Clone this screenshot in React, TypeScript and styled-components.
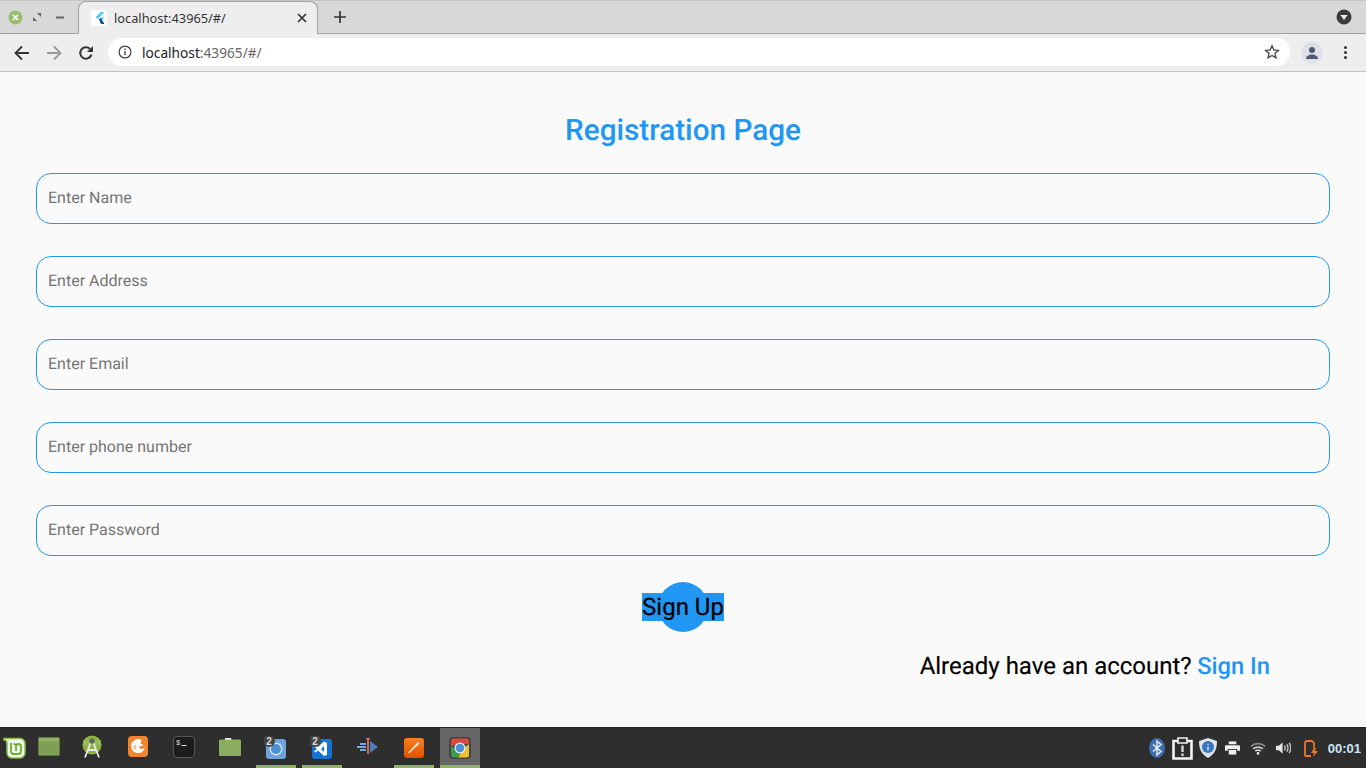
import React from 'react';
import styled, {createGlobalStyle} from 'styled-components';

const GlobalStyle = createGlobalStyle`
  html, body {
    margin: 0;
    padding: 0;
    height: 100%;
    overflow: hidden;
  }
  #root {
    height: 100%;
  }
`;

const Screen = styled.div`
  width: 1366px;
  height: 768px;
  display: flex;
  flex-direction: column;
  background: #fafafa;
  font-family: Roboto, sans-serif;
`;

/* browser chrome */
const TabStrip = styled.div`
  height: 34px;
  box-sizing: border-box;
  display: flex;
  align-items: flex-end;
  background: #d8d8d8;
  border-top: 1px solid #c4c4c4;
  border-bottom: 1px solid #a3a3a3;
`;
const WindowButtons = styled.div`
  width: 78px;
  height: 32px;
  display: flex;
  align-items: center;
  padding-left: 7px;
  box-sizing: border-box;
  gap: 6px;
`;
const WindowButton = styled.div`
  width: 16px;
  height: 16px;
  display: flex;
  align-items: center;
  justify-content: center;
`;
const Tab = styled.div`
  width: 240px;
  height: 33px;
  box-sizing: border-box;
  margin-bottom: -1px;
  display: flex;
  align-items: center;
  padding: 0 10px 0 12px;
  background: #eeeeee;
  border: 1px solid #a3a3a3;
  border-bottom: none;
  border-radius: 8px 8px 0 0;
`;
const TabTitle = styled.span`
  flex: 1;
  margin-left: 7px;
  font-family: 'Noto Sans', sans-serif;
  font-size: 12.8px;
  color: #333;
  white-space: nowrap;
`;
const Favicon = styled.div`
  width: 16px;
  height: 16px;
  background: #fff;
  display: flex;
`;
const NewTab = styled.div`
  width: 44px;
  height: 32px;
  display: flex;
  align-items: center;
  justify-content: center;
`;
const TabSpacer = styled.div`
  flex: 1;
`;
const TabMenu = styled.div`
  width: 16px;
  height: 32px;
  margin-right: 14px;
  display: flex;
  align-items: center;
`;
const Toolbar = styled.div`
  height: 38px;
  box-sizing: border-box;
  display: flex;
  align-items: center;
  background: #eeeeee;
  border-bottom: 1px solid #c2c2c2;
`;
const NavButton = styled.div`
  width: 32px;
  height: 32px;
  display: flex;
  align-items: center;
  justify-content: center;
`;
const NavGroup = styled.div`
  width: 108px;
  display: flex;
  padding-left: 6px;
  box-sizing: border-box;
`;
const Omnibox = styled.div`
  width: 1182px;
  height: 28px;
  margin-top: -1px;
  box-sizing: border-box;
  display: flex;
  align-items: center;
  padding: 0 10px;
  background: #fff;
  border-radius: 14px;
`;
const Url = styled.span`
  flex: 1;
  margin-left: 10px;
  font-family: 'Noto Sans', sans-serif;
  font-size: 13.7px;
  color: #222;
`;
const UrlRest = styled.span`
  color: #666;
`;
const Avatar = styled.div`
  width: 22px;
  height: 22px;
  margin-left: 11px;
  border-radius: 50%;
  background: #dfe1e7;
  display: flex;
  align-items: center;
  justify-content: center;
`;
const MenuDots = styled.div`
  margin-left: 21px;
  display: flex;
  flex-direction: column;
  gap: 2px;
`;
const MenuDot = styled.span`
  width: 3px;
  height: 3px;
  border-radius: 50%;
  background: #333;
`;

/* flutter page */
const Page = styled.main`
  flex: 1;
  display: flex;
  flex-direction: column;
  padding: 39px 36px 0;
  background: #fafafa;
  text-rendering: geometricPrecision;
`;
const Title = styled.h1`
  margin: 0 0 22px;
  text-align: center;
  font-size: 29.7px;
  line-height: 40px;
  font-weight: 500;
  color: #2196f3;
`;
const Fields = styled.div`
  display: flex;
  flex-direction: column;
  gap: 32px;
`;
const Field = styled.div`
  height: 51px;
  box-sizing: border-box;
  display: flex;
  align-items: center;
  padding: 0 11px 2px;
  border: 1px solid #2196f3;
  border-radius: 15px;
  font-size: 16px;
  color: #757575;
`;
const SignUpRow = styled.div`
  margin-top: 26px;
  display: flex;
  justify-content: center;
`;
const SignUpButton = styled.div`
  position: relative;
  width: 82px;
  height: 50px;
  display: flex;
  align-items: center;
  justify-content: center;
  &::before {
    content: '';
    position: absolute;
    left: 16px;
    top: 0;
    width: 50px;
    height: 50px;
    border-radius: 50%;
    background: #2196f3;
  }
`;
const SignUpLabel = styled.span`
  position: relative;
  background: #2196f3;
  color: #000;
  font-size: 24px;
  line-height: 28px;
  white-space: nowrap;
  -webkit-text-stroke: 0.2px #000;
`;
const AccountRow = styled.div`
  margin-top: 20px;
  padding-right: 60px;
  display: flex;
  justify-content: flex-end;
  font-size: 24px;
  line-height: 28px;
  color: #000;
  -webkit-text-stroke: 0.15px #000;
`;
const SignInLink = styled.span`
  margin-left: 5.5px;
  color: #2196f3;
  font-size: 23.7px;
  font-weight: 500;
  -webkit-text-stroke: 0;
`;

/* mint panel */
const Panel = styled.footer`
  height: 41px;
  display: flex;
  align-items: stretch;
  background: #2e2e2e;
  border-top: 1px solid #262626;
  box-sizing: border-box;
`;
const MenuSlot = styled.div`
  width: 29px;
  display: flex;
  align-items: center;
  justify-content: center;
`;
const Launcher = styled.div<{$running?: boolean; $active?: boolean; $after?: number}>`
  width: 40px;
  margin-right: ${p => p.$after ?? 6}px;
  box-sizing: border-box;
  display: flex;
  align-items: center;
  justify-content: center;
  background: ${p => (p.$active ? '#666666' : 'transparent')};
  border-bottom: 3px solid ${p => (p.$running ? '#8fb262' : 'transparent')};
  padding-top: ${p => (p.$running ? 3 : 0)}px;
`;
const Tray = styled.div`
  margin-left: auto;
  display: flex;
  align-items: center;
  padding-right: 5px;
`;
const TraySlot = styled.div<{$gap: number}>`
  margin-left: ${p => p.$gap}px;
  display: flex;
`;
const Clock = styled.span`
  margin-left: 10px;
  font-family: 'Liberation Sans', sans-serif;
  font-size: 13px;
  font-weight: 700;
  color: #cfe5f8;
`;

const Ico = styled.svg`
  display: block;
  flex: none;
`;

function Badged({children}: {children: React.ReactNode}) {
  return (
    <Ico width="24" height="24" viewBox="0 0 24 24">
      {children}
      <circle cx="5" cy="5" r="6" fill="#444" />
      <text x="5" y="8.5" textAnchor="middle" fontSize="10" fontWeight="700" fontFamily="Liberation Sans" fill="#ddd">
        2
      </text>
    </Ico>
  );
}

const FIELDS = ['Enter Name', 'Enter Address', 'Enter Email', 'Enter phone number', 'Enter Password'];

export default function App() {
  return (
    <Screen>
      <GlobalStyle />
      <TabStrip>
        <WindowButtons>
          <WindowButton>
            <Ico width="15" height="15" viewBox="0 0 15 15">
              <circle cx="7.5" cy="7.5" r="7" fill="#98bd6b" />
              <path d="M5 5l5 5M10 5l-5 5" stroke="#fff" strokeWidth="1.7" />
            </Ico>
          </WindowButton>
          <WindowButton>
            <Ico width="8" height="8" viewBox="0 0 10 10">
              <path d="M5 0h5v5zM0 5l5 5H0z" fill="#666" />
            </Ico>
          </WindowButton>
          <WindowButton>
            <Ico width="8" height="3" viewBox="0 0 8 3" style={{marginLeft: 2}}>
              <rect width="8" height="2" y="0.5" fill="#666" />
            </Ico>
          </WindowButton>
        </WindowButtons>
        <Tab>
          <Favicon>
            <Ico width="16" height="16" viewBox="0 0 16 16">
              <path d="M10 2h3.500L6.500 9 4.700 7.300z" fill="#47c5fb" />
              <path d="M10 7.500h3.500L9.700 11.300l-1.800-1.700z" fill="#47c5fb" />
              <path d="M7.900 9.600 9.700 8l3.800 6H10z" fill="#00569e" />
            </Ico>
          </Favicon>
          <TabTitle>localhost:43965/#/</TabTitle>
          <Ico width="10" height="10" viewBox="0 0 10 10">
            <path d="M1 1l8 8M9 1l-8 8" stroke="#333" strokeWidth="1.7" />
          </Ico>
        </Tab>
        <NewTab>
          <Ico width="12" height="12" viewBox="0 0 12 12">
            <path d="M6 0v12M0 6h12" stroke="#333" strokeWidth="1.7" />
          </Ico>
        </NewTab>
        <TabSpacer />
        <TabMenu>
          <Ico width="16" height="16" viewBox="0 0 16 16">
            <circle cx="8" cy="8" r="7.500" fill="#3a3a3a" />
            <path d="M4.400 6h7.200L8 11z" fill="#eee" />
          </Ico>
        </TabMenu>
      </TabStrip>
      <Toolbar>
        <NavGroup>
          <NavButton>
            <Ico width="16" height="16" viewBox="0 0 16 16">
              <path d="M15 8H2M8 1.500 1.500 8 8 14.500" stroke="#333" strokeWidth="1.800" fill="none" />
            </Ico>
          </NavButton>
          <NavButton>
            <Ico width="16" height="16" viewBox="0 0 16 16">
              <path d="M1 8h13M8 1.500 14.500 8 8 14.500" stroke="#999" strokeWidth="1.800" fill="none" />
            </Ico>
          </NavButton>
          <NavButton>
            <Ico width="16" height="16" viewBox="0 0 16 16">
              <path d="M13.400 9.600A5.700 5.700 0 1 1 12 4" stroke="#333" strokeWidth="2" fill="none" />
              <path d="M15 1v6H9z" fill="#333" />
            </Ico>
          </NavButton>
        </NavGroup>
        <Omnibox>
          <Ico width="14" height="14" viewBox="0 0 14 14">
            <circle cx="7" cy="7" r="5.900" stroke="#444" strokeWidth="1.300" fill="none" />
            <path d="M7 6v4.200M7 3.600v1.400" stroke="#444" strokeWidth="1.400" />
          </Ico>
          <Url>
            localhost<UrlRest>:43965/#/</UrlRest>
          </Url>
          <Ico width="16" height="16" viewBox="0 0 16 16">
            <path
              d="M8 1.800 9.800 6l4.600.4-3.500 3 1.100 4.500L8 11.500l-4 2.400 1.100-4.500-3.500-3L6.200 6z"
              stroke="#444"
              strokeWidth="1.300"
              fill="none"
            />
          </Ico>
        </Omnibox>
        <Avatar>
          <Ico width="14" height="14" viewBox="0 0 14 14">
            <circle cx="7" cy="4" r="3" fill="#4d5b76" />
            <path d="M1 13c0-3 3-4.500 6-4.500s6 1.500 6 4.500z" fill="#4d5b76" />
          </Ico>
        </Avatar>
        <MenuDots>
          <MenuDot />
          <MenuDot />
          <MenuDot />
        </MenuDots>
      </Toolbar>

      <Page>
        <Title>Registration Page</Title>
        <Fields>
          {FIELDS.map(label => (
            <Field key={label}>{label}</Field>
          ))}
        </Fields>
        <SignUpRow>
          <SignUpButton>
            <SignUpLabel>Sign Up</SignUpLabel>
          </SignUpButton>
        </SignUpRow>
        <AccountRow>
          Already have an account?<SignInLink>Sign In</SignInLink>
        </AccountRow>
      </Page>

      <Panel>
        <MenuSlot>
          <Ico width="23" height="22" viewBox="0 0 23 22">
            <path d="M1 1.500h16a5 5 0 0 1 5 5V16a5 5 0 0 1-5 5H9a5 5 0 0 1-5-5V6a3 3 0 0 0-3-3z" fill="#f1f7e8" stroke="#86be4b" strokeWidth="1.500" />
            <path d="M8 6v8a3 3 0 0 0 3 3h4a3 3 0 0 0 3-3V9.500a2.500 2.500 0 0 0-5 0V14M13 9.500a2.500 2.500 0 0 0-2.500-2.500" stroke="#6fae35" strokeWidth="1.800" fill="none" />
          </Ico>
        </MenuSlot>
        <Launcher $after={3}>
          <Ico width="22" height="19" viewBox="0 0 22 19">
            <rect x="0.500" y="0.500" width="21" height="18" rx="1" fill="#7f9f55" stroke="#5e7a3c" />
            <rect x="1" y="1" width="20" height="3.500" fill="#93b268" />
          </Ico>
        </Launcher>
        <Launcher>
          <Ico width="20" height="24" viewBox="0 0 20 24">
            <circle cx="10" cy="10" r="9.500" fill="#8cb33f" />
            <path d="M1 5h18v5H1z" fill="#a8c86a" opacity="0.500" />
            <path d="M10 4 3 22.500M10 4l7 18.500M5.500 15h9" stroke="#e8e8e8" strokeWidth="1.800" fill="none" />
            <circle cx="10" cy="6" r="2.800" fill="#5d6b57" />
          </Ico>
        </Launcher>
        <Launcher>
          <Ico width="20" height="21" viewBox="0 0 20 21">
            <rect width="20" height="21" rx="4" fill="#f0852e" />
            <path d="M13.500 4a7 7 0 1 0 3.500 7c-1 2-3.500 2.500-5 1.500-1-.7-1-2 0-2.500h3c0-1.200-1-2-2.300-2 .3-1.500.5-2.700.8-4zM9 8.500c-1 .5-2 1.500-2 3 0 2 2 3 4 3-2.500 0-5-1-5-3.500 0-1 1-2 3-2.500z" fill="#fff" />
          </Ico>
        </Launcher>
        <Launcher>
          <Ico width="22" height="22" viewBox="0 0 22 22">
            <rect x="0.500" y="0.500" width="21" height="21" rx="3.500" fill="#1c1c1c" stroke="#555" />
            <text x="3" y="9" fontSize="7" fontFamily="Liberation Mono" fill="#ddd">$</text>
            <path d="M8.500 9.500h5" stroke="#ddd" strokeWidth="1" />
          </Ico>
        </Launcher>
        <Launcher>
          <Ico width="22" height="19" viewBox="0 0 22 19">
            <path d="M1 2.500h5l1-1.500h5l1 1.500h8a1 1 0 0 1 1 1V18a1 1 0 0 1-1 1H1a1 1 0 0 1-1-1V3.500a1 1 0 0 1 1-1z" fill="#8aac5e" />
            <path d="M6 1h6v1.800H6z" fill="#f0f0f0" />
          </Ico>
        </Launcher>
        <Launcher $running>
          <Badged>
            <rect x="2" y="3" width="20" height="20" rx="3" fill="#6fa3dc" />
            <circle cx="12" cy="13" r="6.500" fill="#cfe2f7" />
            <circle cx="12" cy="13" r="5" fill="#4d8ed1" />
          </Badged>
        </Launcher>
        <Launcher $running>
          <Badged>
            <rect x="2" y="3" width="20" height="20" rx="3" fill="#1273d4" />
            <path d="M17 7v12l-3 1-6-5.500-2.500 2L4 15.500 7 13 4 10.500 5.500 9 8 11l6-5.500zM14 10l-3 3 3 3z" fill="#fff" />
          </Badged>
        </Launcher>
        <Launcher>
          <Ico width="22" height="20" viewBox="0 0 22 20">
            <path d="M11 3v14" stroke="#c86a62" strokeWidth="2" />
            <path d="M9 1h4l-1 2h-2z" fill="#d97a6f" />
            <path d="M13 4l8 6-8 6z" fill="#4f7fb5" />
            <path d="M3 7h6M0 10h9M3 13h6" stroke="#79a8dc" strokeWidth="2" />
          </Ico>
        </Launcher>
        <Launcher $running>
          <Ico width="20" height="20" viewBox="0 0 20 20">
            <defs>
              <linearGradient id="pencilBg" x1="0" y1="0" x2="0" y2="1">
                <stop offset="0" stopColor="#f58220" />
                <stop offset="1" stopColor="#e04e00" />
              </linearGradient>
            </defs>
            <rect width="20" height="20" rx="3" fill="url(#pencilBg)" />
            <path d="M4 16l1-2.500 7.500-8 2-1.500 1 1-1.500 2-8 7.500z" fill="#f7e6d2" />
          </Ico>
        </Launcher>
        <Launcher $running $active $after={0}>
          <Ico width="22" height="22" viewBox="0 0 22 22">
            <rect width="22" height="22" rx="4" fill="#444" />
            <path d="M2 9V4a2.500 2.500 0 0 1 2.500-2.500h13A2.500 2.500 0 0 1 20 4v3H11z" fill="#d8483b" />
            <path d="M2 9v9a2.500 2.500 0 0 0 2.500 2.500H9l3-6z" fill="#3d9a4a" />
            <path d="M20 7v11a2.500 2.500 0 0 1-2.500 2.500H9L15 11z" fill="#eec22f" />
            <circle cx="11" cy="11" r="5.500" fill="#e8eef5" />
            <circle cx="11" cy="11" r="4.300" fill="#4f8fd6" />
          </Ico>
        </Launcher>
        <Tray>
          <TraySlot $gap={0}>
            <Ico width="16" height="20" viewBox="0 0 16 20">
              <ellipse cx="8" cy="10" rx="8" ry="10" fill="#3f70ae" />
              <path d="M4 6.500l8 7-4 3.500V3l4 3.500-8 7" stroke="#e8f0fa" strokeWidth="1.400" fill="none" />
            </Ico>
          </TraySlot>
          <TraySlot $gap={7}>
            <Ico width="21" height="23" viewBox="0 0 21 23">
              <path d="M6 4H1.500v17.500h18V4H15" stroke="#f4f4f4" strokeWidth="2.600" fill="none" />
              <path d="M6 1h9v5H6z" stroke="#f4f4f4" strokeWidth="1.600" fill="none" />
              <path d="M10.500 8.500v6.500M10.500 16.500v2.500" stroke="#d8d8d8" strokeWidth="2.400" />
            </Ico>
          </TraySlot>
          <TraySlot $gap={6}>
            <Ico width="18" height="20" viewBox="0 0 18 20">
              <path d="M9 0 18 3c0 8-2 13-9 17C2 16 0 11 0 3z" fill="#dfe3e6" />
              <circle cx="9" cy="9" r="6" fill="#3577c2" />
              <path d="M9 6v1M9 8.500v4" stroke="#e8f0fa" strokeWidth="1.400" />
            </Ico>
          </TraySlot>
          <TraySlot $gap={8}>
            <Ico width="15" height="14" viewBox="0 0 16 14">
              <path d="M4 0h8v3H4z" fill="#f0f0f0" />
              <path d="M1 4h14a1 1 0 0 1 1 1v5h-3V8H3v2H0V5a1 1 0 0 1 1-1z" fill="#f0f0f0" />
              <path d="M4 9h8v5H4z" fill="#f0f0f0" />
            </Ico>
          </TraySlot>
          <TraySlot $gap={10}>
            <Ico width="16" height="13" viewBox="0 0 18 14">
              <path d="M1 4.500c4.500-4 11.500-4 16 0" stroke="#8a8a8a" strokeWidth="1.800" fill="none" />
              <path d="M3.500 7.500c3-2.700 8-2.700 11 0" stroke="#c8c8c8" strokeWidth="1.800" fill="none" />
              <path d="M6 10c1.600-1.400 4.400-1.400 6 0" stroke="#e8e8e8" strokeWidth="1.800" fill="none" />
              <circle cx="9" cy="12.500" r="1.500" fill="#f0f0f0" />
            </Ico>
          </TraySlot>
          <TraySlot $gap={10}>
            <Ico width="15" height="14" viewBox="0 0 16 14">
              <path d="M0 4.500h3L7 1v12L3 9.500H0z" fill="#e6e6e6" />
              <path d="M9 4.500c1 1.500 1 3.500 0 5M11.500 3c1.700 2.500 1.700 5.500 0 8M14 1.500c2.300 3.500 2.300 7.500 0 11" stroke="#d0d0d0" strokeWidth="1.400" fill="none" />
            </Ico>
          </TraySlot>
          <TraySlot $gap={13}>
            <Ico width="14" height="17" viewBox="0 0 14 17">
              <path d="M3 1h5l2 2v5M7 16H2a1 1 0 0 1-1-1V3a2 2 0 0 1 2-2" stroke="#f07328" strokeWidth="1.800" fill="none" />
              <path d="M10 8 7 13h3l-1 4 5-6h-3l1-3z" fill="#f07328" />
            </Ico>
          </TraySlot>
          <Clock>00:01</Clock>
        </Tray>
      </Panel>
    </Screen>
  );
}
